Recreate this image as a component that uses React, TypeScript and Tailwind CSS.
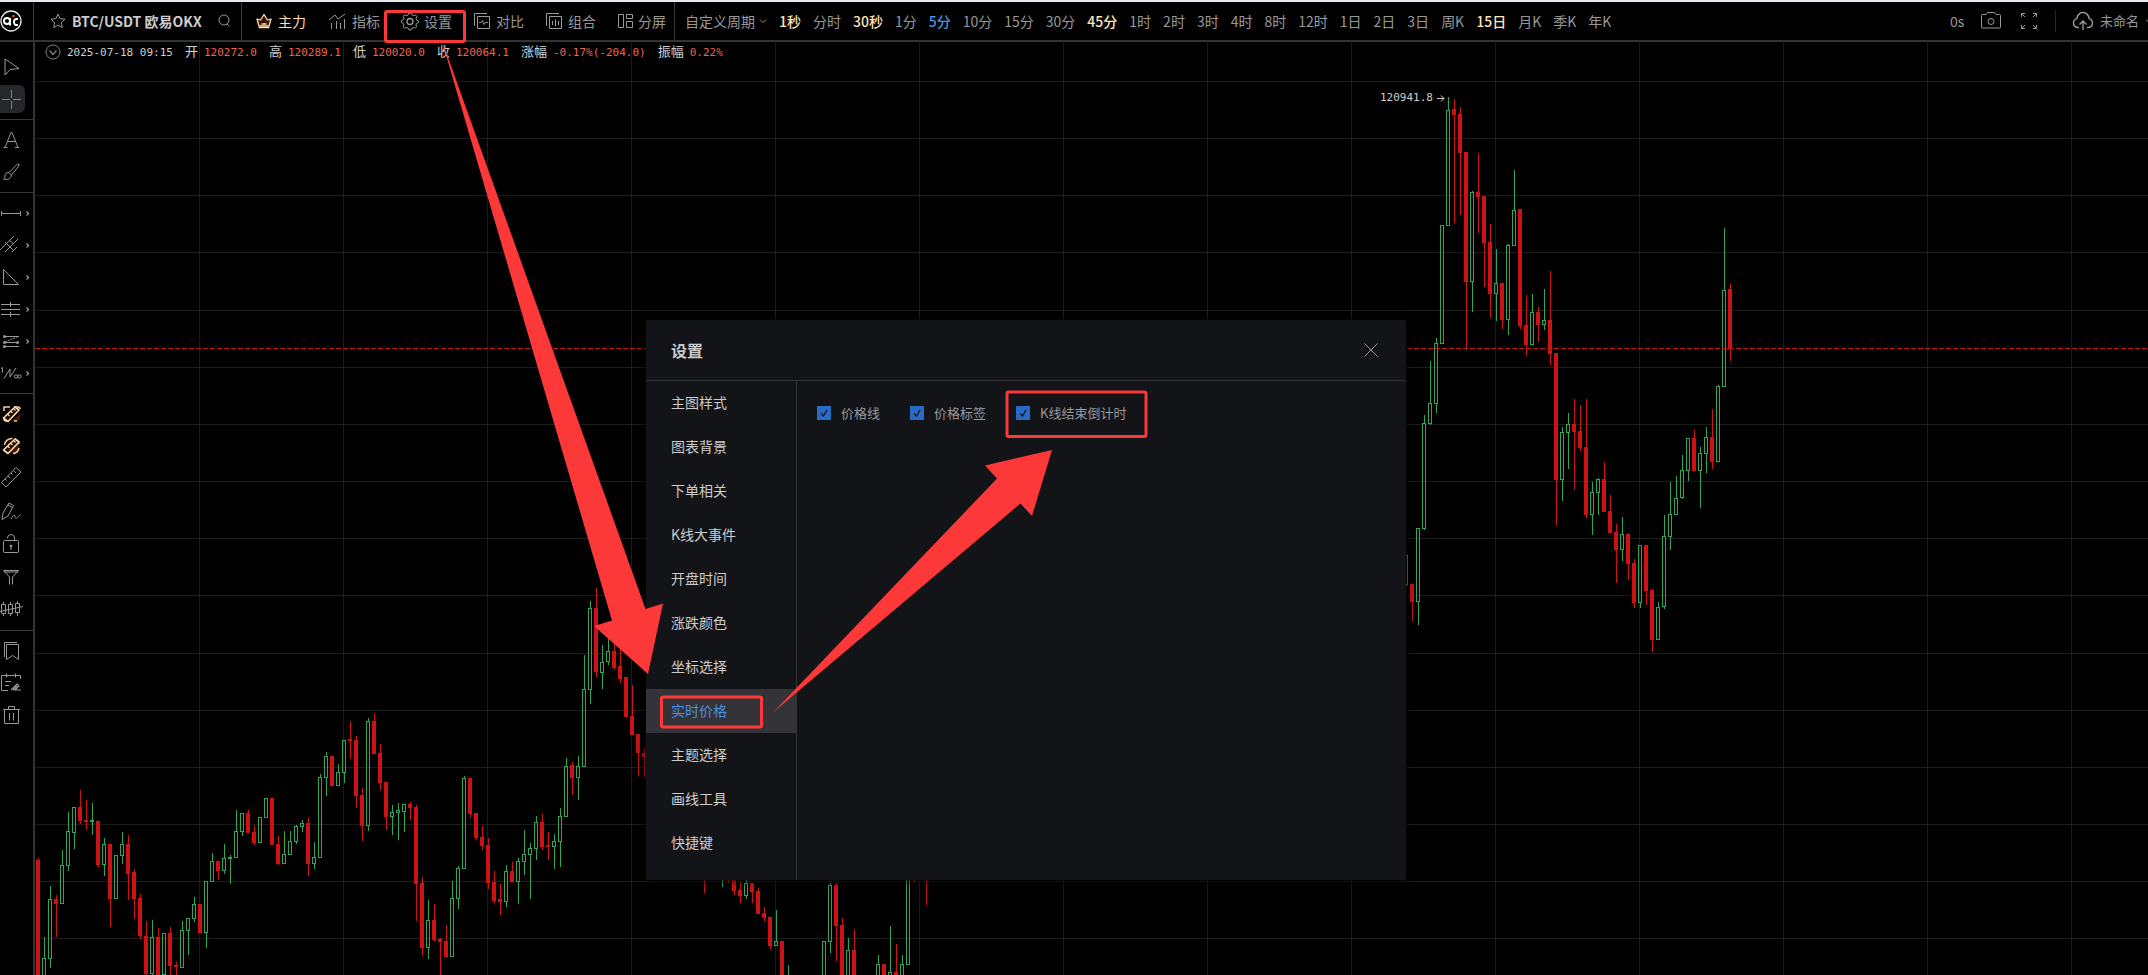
import { useState, type ReactNode } from "react";

// [up, high, body top, body bottom, low]
type Candle = [0 | 1, number, number, number, number];

const CANDLE_STEP = 6;
const LAST_PRICE_Y = 348;

// Each run starts at the given bar index; bars between the runs sit behind the dialog.
const RUNS: { start: number; bars: Candle[] }[] = [
  {
    start: 0,
    bars: [
      [0, 858, 860, 980, 980], [1, 937, 958, 985, 985], [1, 886, 899, 959, 968], [0, 895, 899, 904, 937],
      [1, 850, 865, 904, 904], [1, 812, 831, 866, 871], [1, 807, 807, 833, 849], [0, 790, 807, 821, 824],
      [0, 800, 820, 822, 830], [1, 803, 820, 822, 835], [0, 821, 821, 865, 867], [1, 838, 844, 865, 876],
      [0, 844, 844, 899, 927], [1, 855, 855, 899, 899], [1, 832, 844, 856, 864], [0, 835, 844, 874, 900],
      [0, 869, 872, 899, 919], [0, 894, 898, 936, 939], [0, 921, 936, 974, 980], [1, 920, 937, 974, 980],
      [0, 928, 937, 980, 980], [1, 933, 933, 975, 980], [0, 927, 933, 966, 980], [0, 962, 965, 967, 980],
      [1, 921, 930, 968, 968], [1, 918, 918, 931, 955], [1, 897, 904, 919, 922], [0, 904, 904, 933, 933],
      [1, 881, 881, 933, 948], [1, 853, 861, 882, 882], [0, 861, 861, 871, 880], [1, 844, 858, 871, 874],
      [1, 855, 857, 859, 884], [1, 810, 831, 858, 858], [1, 813, 813, 832, 836], [0, 810, 813, 833, 833],
      [0, 825, 832, 843, 845], [1, 817, 817, 843, 843], [1, 798, 798, 818, 818], [0, 798, 798, 845, 845],
      [0, 836, 844, 864, 865], [1, 831, 854, 864, 864], [1, 831, 841, 855, 855], [1, 825, 826, 842, 844],
      [1, 820, 823, 827, 832], [0, 818, 823, 864, 876], [1, 842, 857, 864, 869], [1, 774, 777, 858, 858],
      [1, 752, 756, 778, 796], [0, 756, 756, 786, 786], [1, 764, 772, 786, 786], [1, 740, 740, 773, 783],
      [0, 721, 739, 741, 759], [0, 736, 740, 796, 808], [0, 788, 795, 826, 841], [1, 718, 721, 826, 831],
      [0, 714, 721, 754, 754], [0, 744, 753, 783, 790], [0, 782, 782, 817, 830], [1, 805, 812, 817, 835],
      [1, 803, 810, 813, 840], [1, 804, 804, 812, 832], [0, 802, 804, 808, 820], [0, 805, 807, 884, 921],
      [0, 877, 883, 948, 955], [1, 900, 920, 948, 959], [0, 904, 920, 940, 942], [0, 938, 939, 942, 980],
      [0, 925, 941, 957, 957], [1, 881, 898, 957, 957], [1, 866, 868, 899, 909], [1, 776, 778, 869, 869],
      [0, 778, 778, 814, 818], [0, 813, 813, 838, 840], [0, 826, 837, 846, 850], [0, 838, 845, 883, 889],
      [0, 871, 882, 901, 903], [0, 884, 899, 902, 915], [1, 865, 871, 902, 907], [0, 862, 871, 882, 882],
      [1, 858, 861, 882, 904], [1, 830, 854, 862, 875], [1, 843, 848, 855, 899], [1, 816, 822, 849, 860],
      [0, 814, 822, 847, 850], [0, 832, 845, 847, 860], [1, 834, 841, 847, 869], [1, 808, 816, 842, 867],
      [1, 758, 766, 817, 817], [0, 762, 765, 778, 795], [1, 756, 766, 778, 800], [1, 655, 689, 767, 767],
      [1, 601, 608, 690, 704], [0, 588, 608, 672, 677], [1, 645, 662, 673, 689], [1, 638, 651, 662, 665],
      [0, 643, 651, 668, 670], [0, 649, 666, 679, 683], [0, 677, 677, 717, 717], [0, 685, 716, 735, 735],
      [0, 734, 734, 753, 776], [0, 748, 753, 757, 777],
    ],
  },
  { start: 111, bars: [[0, 850, 855, 860, 893]] },
  {
    start: 114,
    bars: [
      [1, 850, 855, 860, 887], [0, 850, 855, 870, 883], [0, 850, 860, 891, 895], [0, 882, 890, 896, 903],
      [1, 880, 883, 896, 899], [0, 883, 883, 892, 903], [0, 888, 891, 914, 914], [0, 907, 913, 918, 921],
      [0, 917, 917, 946, 950], [1, 910, 941, 946, 946], [0, 941, 941, 980, 980], [1, 965, 985, 990, 990],
    ],
  },
  {
    start: 131,
    bars: [
      [1, 941, 941, 980, 980], [1, 883, 885, 942, 953], [0, 883, 885, 926, 961], [0, 918, 925, 980, 980],
      [1, 938, 950, 980, 980], [0, 930, 950, 980, 980],
    ],
  },
  {
    start: 140,
    bars: [
      [1, 955, 964, 980, 980], [0, 964, 964, 980, 980], [1, 926, 972, 980, 980], [0, 944, 972, 980, 980],
      [1, 955, 964, 980, 980], [1, 870, 870, 965, 965], [0, 860, 865, 870, 882],
    ],
  },
  { start: 148, bars: [[0, 860, 865, 870, 905]] },
  {
    start: 228,
    bars: [
      [1, 555, 555, 585, 586], [0, 584, 584, 602, 621], [1, 528, 528, 602, 625], [1, 415, 423, 529, 530],
      [1, 361, 403, 424, 425], [1, 338, 343, 404, 413], [1, 225, 225, 344, 344], [1, 97, 110, 226, 226],
      [0, 99, 109, 115, 223], [0, 107, 114, 153, 215], [0, 152, 152, 282, 350], [1, 191, 192, 282, 312],
      [0, 153, 192, 197, 233], [0, 196, 196, 243, 287], [0, 224, 242, 294, 318], [1, 249, 283, 294, 321],
      [0, 283, 283, 320, 329], [1, 244, 245, 320, 335], [1, 170, 210, 246, 246], [0, 209, 209, 326, 329],
      [0, 295, 325, 345, 355], [1, 294, 312, 345, 345], [0, 307, 312, 325, 342], [1, 289, 320, 325, 330],
      [0, 271, 320, 354, 365], [0, 353, 353, 480, 525], [1, 427, 432, 480, 501], [1, 413, 424, 433, 469],
      [0, 399, 424, 432, 490], [0, 405, 431, 448, 451], [0, 399, 447, 515, 518], [1, 482, 492, 515, 535],
      [1, 478, 479, 493, 515], [0, 462, 479, 512, 512], [0, 495, 511, 533, 533], [0, 524, 532, 550, 583],
      [1, 517, 534, 550, 561], [0, 533, 534, 564, 580], [0, 559, 563, 603, 608], [1, 545, 545, 603, 608],
      [0, 545, 545, 591, 605], [0, 589, 590, 640, 652], [1, 602, 607, 640, 640], [1, 515, 536, 607, 609],
      [1, 482, 514, 537, 550], [1, 476, 498, 515, 515], [1, 455, 470, 498, 499], [1, 438, 438, 471, 481],
      [0, 430, 438, 471, 471], [1, 447, 453, 471, 508], [1, 427, 437, 454, 473], [0, 409, 437, 462, 469],
      [1, 385, 386, 462, 462], [1, 228, 290, 387, 387], [0, 284, 289, 349, 361],
    ],
  },
];

const GRID_Y = [81, 138, 195, 252, 310, 367, 424, 481, 538, 595, 653, 710, 767, 824, 881, 938];
const GRID_X = [199, 343, 487, 631, 775, 919, 1063, 1207, 1351, 1495, 1639, 1783, 1927, 2071];

const PERIODS: { label: string; tone?: "vip" | "active" }[] = [
  { label: "1秒", tone: "vip" },
  { label: "分时" },
  { label: "30秒", tone: "vip" },
  { label: "1分" },
  { label: "5分", tone: "active" },
  { label: "10分" },
  { label: "15分" },
  { label: "30分" },
  { label: "45分", tone: "vip" },
  { label: "1时" },
  { label: "2时" },
  { label: "3时" },
  { label: "4时" },
  { label: "8时" },
  { label: "12时" },
  { label: "1日" },
  { label: "2日" },
  { label: "3日" },
  { label: "周K" },
  { label: "15日", tone: "vip" },
  { label: "月K" },
  { label: "季K" },
  { label: "年K" },
];

const QUOTES = [
  { label: "开", value: "120272.0" },
  { label: "高", value: "120289.1" },
  { label: "低", value: "120020.0" },
  { label: "收", value: "120064.1" },
  { label: "涨幅", value: "-0.17%(-204.0)" },
  { label: "振幅", value: "0.22%" },
];

const MENU = [
  "主图样式",
  "图表背景",
  "下单相关",
  "K线大事件",
  "开盘时间",
  "涨跌颜色",
  "坐标选择",
  "实时价格",
  "主题选择",
  "画线工具",
  "快捷键",
];

const PRICE_OPTIONS = ["价格线", "价格标签", "K线结束倒计时"];

function Icon({ size = 16, className, children }: { size?: number; className?: string; children: ReactNode }) {
  return (
    <svg
      width={size}
      height={size}
      viewBox={`0 0 ${size} ${size}`}
      fill="none"
      stroke="currentColor"
      className={`shrink-0 ${className ?? ""}`}
      aria-hidden="true"
    >
      {children}
    </svg>
  );
}

function LinkedRuler({ round }: { round?: boolean }) {
  return (
    <>
      {round ? (
        <>
          <circle cx="13" cy="13" r="6" fill="#4a1708" stroke="none" />
          <path d="M4.500 11a7.500 7.500 0 0 1 8-6.500M15 5a7 7 0 0 1 4 5M19 14a7 7 0 0 1-6 5.500M9 19a7 7 0 0 1-4-3.500" stroke="#f5cf94" strokeWidth="1.500" />
        </>
      ) : (
        <>
          <path d="M11 19h6a3 3 0 0 0 3-3v-4z" fill="#4a1708" stroke="none" />
          <path d="M4 9V5h6M14 5h4a2 2 0 0 1 2 2M4 15v2a2 2 0 0 0 2 2h2M14 19h3" stroke="#f5cf94" strokeWidth="1.500" />
        </>
      )}
      <path d="M3.500 16 15 5l4 3L8 19.500z" fill="#1c0a04" stroke="#ffdda6" strokeWidth="1.600" strokeLinejoin="round" />
      <path d="m8 12.500 1.500 1.500M11 9.500l1.500 1.500M14 7l1.500 1.500" stroke="#ffdda6" strokeWidth="1.200" />
    </>
  );
}

// Drawn on a 24px box.
const TOOL_GROUPS: { name: string; more?: boolean; active?: boolean; draw: ReactNode }[][] = [
  [
    { name: "光标", draw: <path d="M5 4v16l5-5.500 9-1z" strokeLinejoin="round" /> },
    { name: "十字光标", active: true, draw: <path d="M2 12.500h8M13 12.500h8M11.500 3v8M11.500 14v8" /> },
  ],
  [
    { name: "文字", draw: <path d="m5 19.500 6-15h1l6 15M7.500 13.500h8M3.500 19.500h4M15 19.500h4" /> },
    {
      name: "画笔",
      draw: (
        <path d="M9 12.500 17 4.500l2-.500-.500 2.500-7 8.500M9 12.500l2.500 2.500M9 12.500c-3 0-4 1.500-4 3.500 0 1.500-.500 2.500-1.500 3 3 1 7.500.500 8-4" />
      ),
    },
  ],
  [
    { name: "线段", more: true, draw: <path d="M1.500 12.500h19M1.500 10v5M20.500 10v5" /> },
    {
      name: "平行线",
      more: true,
      draw: <path d="M0 17 14 3M5 19 18 6M12 19l5-5M5 9l6 6M9 7l5 4M8 12l5 5" />,
    },
    { name: "三角形", more: true, draw: <path d="M3.500 4.500v15h15z" /> },
    { name: "水平线", more: true, draw: <path d="M1 7.500h19M1 12.500h19M1 17.500h19M10.500 5v5M10.500 15v5" /> },
    {
      name: "斐波那契",
      more: true,
      draw: (
        <>
          <path d="M4 7.500h15M4 13.500h14M4 17.500h15" />
          <path d="m5 13 13-5.500" strokeDasharray="2 1" />
          <g fill="currentColor" stroke="none">
            <circle cx="4.500" cy="7.500" r="1.500" />
            <circle cx="4.500" cy="13.500" r="1.500" />
            <circle cx="17.500" cy="13.500" r="1.500" />
            <circle cx="4.500" cy="17.500" r="1.500" />
          </g>
        </>
      ),
    },
    {
      name: "波浪",
      more: true,
      draw: (
        <>
          <path d="M1 7.500 2.500 6.500v5M4 17.500 10 8v8l6-9" />
          <circle cx="16" cy="15.500" r="1.700" />
          <circle cx="19.500" cy="15.500" r="1.700" />
        </>
      ),
    },
  ],
  [
    { name: "关联画线", draw: <LinkedRuler /> },
    { name: "关联周期", draw: <LinkedRuler round /> },
    {
      name: "测量",
      draw: <path d="M1.500 16.500 16 1.500l5 4.500L6 21zM5 13l1.500 1.500M8 10l2.500 2.500M11 7l1.500 1.500M13.500 4.500 16 7" />,
    },
    {
      name: "自由绘制",
      draw: (
        <path d="m2 21.500 1-6.500L9 5l4.500 2.500L8 18zM8 7l4.500 2.500M11 21c2-4 4-5 4-2.500s2 2 3.500 0 2-1.500 2.500-1.500" />
      ),
    },
    {
      name: "锁定",
      draw: (
        <>
          <rect x="3.500" y="10.500" width="15" height="12" rx="1" />
          <path d="M7.500 8.500V8a3.500 3.500 0 0 1 7 0v2.500M11 17v3" />
          <circle cx="11" cy="16" r="1.300" fill="currentColor" stroke="none" />
        </>
      ),
    },
    { name: "筛选", draw: <path d="M3.500 8.500h15M4 10h14M3.500 8.500 9.500 15v7.500M18.500 8.500 12.500 15v7.500" /> },
    {
      name: "K线形态",
      draw: (
        <path d="M1.500 10.500h4v9h-4zM8.500 10.500h4v9h-4zM15.500 9.500h4v9h-4zM3.500 8v2.500M3.500 19.500V22M10.500 8v2.500M10.500 19.500V22M17.500 7v2.500M17.500 18.500V22M0 17.500l23-5" />
      ),
    },
  ],
  [
    { name: "书签", draw: <path d="M6.500 5.500h12v15l-6-4-6 4zM4.500 18V3.500H17" /> },
    {
      name: "备注",
      draw: (
        <>
          <path d="M8 19.500H1.500v-15H20.500V8M6.500 2.500v4M15.500 2.500v4M5 10.500h6M5 14.500h4" />
          <path d="m11 19 6-6 2 2-4 4h6M13 19l4-4" strokeWidth="1.200" />
        </>
      ),
    },
    { name: "删除", draw: <path d="M3 6.500h17M8.500 6V3.500h6V6M4.500 6.500v14h14v-14M9.500 10v7.500M13.500 10v7.500" /> },
  ],
];

function Toolbar() {
  const tab = "flex items-center gap-1.5";
  return (
    <header className="flex h-10 shrink-0 items-stretch border-b-2 border-[#333] bg-black text-sm leading-5 text-[#999]">
      <a href="#home" aria-label="首页" className="flex w-[34px] shrink-0 items-center border-r border-[#3a3a3a]">
        <Icon size={22}>
          <circle cx="11" cy="11" r="10" stroke="#e6e6e6" strokeWidth="1.300" />
          <circle cx="7" cy="11" r="3" stroke="#fff" strokeWidth="2" />
          <path d="M10 8v7.500M18 9c-3-.500-4 1-4 3s1 3.500 4 3" stroke="#fff" strokeWidth="2" />
          <circle cx="13.500" cy="6" r="1.300" fill="#e8403a" stroke="none" />
        </Icon>
      </a>

      <div className="flex w-52 shrink-0 items-center border-r border-[#3a3a3a] pl-4">
        <button type="button" aria-label="收藏" className="mr-1.5">
          <Icon>
            <path d="m8 1 2 4.600 5 .600-3.700 3.400 1 5L8 12l-4.300 2.600 1-5L1 6.200l5-.600z" strokeLinejoin="round" />
          </Icon>
        </button>
        <span className="w-[136px] whitespace-nowrap font-bold text-[#ccc]">BTC/USDT 欧易OKX</span>
        <button type="button" aria-label="搜索" className="ml-2">
          <Icon>
            <circle cx="8" cy="7" r="5" />
            <path d="m11 11 2.500 2.500" />
          </Icon>
        </button>
      </div>

      <nav className="flex shrink-0 items-center gap-[22px] whitespace-nowrap border-r border-[#3a3a3a] pl-3.5 pr-2">
        <button type="button" className="flex items-center gap-1.5 text-[#ffdca8]">
          <Icon>
            <path d="m3 13-2-7 3.500 1L8 1.500 11.500 7 15 6l-2 7z" fill="#3a1206" strokeWidth="1.300" strokeLinejoin="round" />
            <path d="M2.500 14.500h11M5.500 11h5" strokeWidth="1.500" />
          </Icon>
          主力
        </button>
        <button type="button" className={tab}>
          <Icon size={18}>
            <path d="M3.500 11v6M8.500 9v8M12.500 11v6M16.500 7v10M1 8l6-5 3 4 7-5" />
          </Icon>
          指标
        </button>
        <button type="button" className={tab}>
          <Icon className="overflow-visible">
            <path
              d="M7 0h2l1 2 1.500.600L13.500 2 15 3.500 14 5.500l.500 1.500L16.500 8v1.500L14.500 10.500 14 12l.600 2-1.300 1.200L11.500 14.500 10 15l-1 2H7L6 15l-1.500-.500L2.500 15.200 1.200 14 2 12l-.600-1.500L-.500 9.500V7.500L1.500 6.500 2 5 1.200 3.500 2.500 2 4.500 2.600 6 2z"
              strokeLinejoin="round"
            />
            <circle cx="8" cy="8.500" r="3" strokeWidth="1.300" />
          </Icon>
          设置
        </button>
        <button type="button" className={tab}>
          <Icon>
            <path d="M3.500 3.500h12v12h-12zM.500 13V.500H13M5 9.500h2l1.500-2 1.500 4 1.500-2H14" />
          </Icon>
          对比
        </button>
        <button type="button" className={tab}>
          <Icon>
            <path d="M3.500 3.500h12v12h-12zM.500 13V.500H13M6.500 8v4M9.500 6.500V13M12.500 8v4" />
          </Icon>
          组合
        </button>
        <button type="button" className="flex items-center gap-1">
          <Icon>
            <path d="M.500 1.500h5v13h-5zM8.500 1.500h6v4h-6zM8.500 8.500h6v6h-6z" />
          </Icon>
          分屏
        </button>
      </nav>

      <div className="flex min-w-0 items-center gap-3 overflow-hidden whitespace-nowrap pl-2.5">
        <button type="button" className="flex items-center gap-1">
          自定义周期
          <Icon size={8}>
            <path d="m1 2.500 3 3 3-3" />
          </Icon>
        </button>
        {PERIODS.map((period) => (
          <button
            key={period.label}
            type="button"
            className={
              period.tone === "vip"
                ? "font-medium text-[#ffe2b8]"
                : period.tone === "active"
                  ? "font-medium text-[#4a90e2]"
                  : ""
            }
          >
            {period.label}
          </button>
        ))}
      </div>

      <div className="ml-auto flex w-[198px] shrink-0 items-center overflow-hidden whitespace-nowrap">
        <span className="w-[31px] shrink-0">0s</span>
        <button type="button" aria-label="截图" className="mr-5 shrink-0">
          <Icon size={20}>
            <path d="M1.500 3.500h3.500l1.500-2h7l1.500 2h3.500a1 1 0 0 1 1 1v11.500a1 1 0 0 1-1 1h-17a1 1 0 0 1-1-1V4.500a1 1 0 0 1 1-1z" />
            <circle cx="10" cy="10.500" r="3" />
          </Icon>
        </button>
        <button type="button" aria-label="全屏" className="mr-[18px] shrink-0">
          <Icon>
            <path d="M.500 4V.500H4M12 .500h3.500V4M15.500 12v3.500H12M4 15.500H.500V12M.500.500 4 4M15.500.500 12 4M15.500 15.500 12 12M.500 15.500 4 12" />
          </Icon>
        </button>
        <button type="button" className="flex shrink-0 items-center gap-1.5 border-l border-[#262626] pl-4 text-[13px]">
          <Icon size={22}>
            <path
              d="M7 17.500H5.500a4.500 4.500 0 0 1-.700-8.800C5.500 5 8 2.500 11 2.500s5.500 2.500 6.200 6.200a4.500 4.500 0 0 1-.700 8.800H15M11 20v-9M7.500 14.500 11 11l3.500 3.500"
              strokeWidth="1.400"
            />
          </Icon>
          未命名
          <Icon size={8}>
            <path d="m1 2.500 3 3 3-3" />
          </Icon>
        </button>
      </div>
    </header>
  );
}

function ToolRail() {
  return (
    <aside className="flex w-[35px] shrink-0 flex-col border-r-2 border-[#333] pt-[5px] text-[#999]">
      {TOOL_GROUPS.map((group, index) => (
        <div key={index} className={`border-b border-[#3a3a3a] pt-1 last:border-b-0 ${index === 3 ? "pb-2" : "pb-1"}`}>
          {group.map((tool) => (
            <button key={tool.name} type="button" aria-label={tool.name} className="flex h-8 w-full items-center">
              <span
                className={
                  tool.active
                    ? "flex h-7 w-[25px] items-center rounded-r-md bg-[#26272b] text-[#4a90e2]"
                    : "flex h-7 w-[25px] items-center"
                }
              >
                <Icon size={24}>{tool.draw}</Icon>
              </span>
              {tool.more && (
                <Icon size={5}>
                  <path d="m1.500.500 2 2-2 2" strokeWidth="1.300" />
                </Icon>
              )}
            </button>
          ))}
        </div>
      ))}
    </aside>
  );
}

function CandleBar({ index, bar }: { index: number; bar: Candle }) {
  const [up, high, top, bottom, low] = bar;
  const x = 36 + index * CANDLE_STEP;
  if (up) {
    return (
      <g fill="#2fa557">
        <rect x={x + 2} y={high} width={1} height={top - high} />
        <rect x={x + 2} y={bottom} width={1} height={low - bottom} />
        <rect x={x + 0.5} y={top + 0.5} width={3} height={Math.max(bottom - top - 1, 1)} fill="none" stroke="#2fa557" />
      </g>
    );
  }
  return (
    <g fill="#cc1212">
      <rect x={x + 2} y={high} width={1} height={low - high} />
      <rect x={x} y={top} width={4} height={bottom - top} />
    </g>
  );
}

function Chart() {
  return (
    <div className="relative min-w-0 flex-1 overflow-hidden">
      <svg className="absolute inset-0 h-full w-full" shapeRendering="crispEdges" role="img" aria-label="K线图">
        <g transform="translate(-35 -42)">
          {GRID_Y.map((y) => (
            <rect key={y} x={35} y={y} width={4000} height={1} fill="#1c1c1c" />
          ))}
          {GRID_X.map((x) => (
            <rect key={x} x={x} y={42} width={1} height={3000} fill="#1c1c1c" />
          ))}
          {RUNS.map((run) =>
            run.bars.map((bar, i) => <CandleBar key={run.start + i} index={run.start + i} bar={bar} />),
          )}
          <path d={`M35 ${LAST_PRICE_Y + 0.5}H4000`} stroke="#cc1212" strokeDasharray="5 2" />
          <text x="1380" y="101" fill="#d0d0d0" fontSize="11" fontFamily="DejaVu Sans Mono, monospace">
            120941.8
          </text>
          <path d="M1437 98.500h7M1441 95.500l3 3-3 3" fill="none" stroke="#d0d0d0" shapeRendering="auto" />
        </g>
      </svg>

      <div className="relative flex items-center whitespace-nowrap pl-2.5 leading-[18px]">
        <button type="button" aria-label="收起" className="mr-1.5 text-[#808080]">
          <Icon>
            <circle cx="8" cy="8" r="7" />
            <path d="m4.500 6.500 3.500 4 3.500-4" strokeWidth="1.200" />
          </Icon>
        </button>
        <div className="flex items-baseline gap-3">
          <span className="font-['DejaVu_Sans_Mono',monospace] text-[11px] text-[#d0d0d0]">2025-07-18 09:15</span>
          {QUOTES.map((quote) => (
            <span key={quote.label} className="flex items-baseline gap-1.5">
              <span className="text-[13px] text-[#d0d0d0]">{quote.label}</span>
              <span className="font-['DejaVu_Sans_Mono',monospace] text-[11px] text-[#f4604c]">{quote.value}</span>
            </span>
          ))}
        </div>
      </div>
    </div>
  );
}

function SettingsDialog() {
  const [section, setSection] = useState("实时价格");
  const [enabled, setEnabled] = useState<string[]>(PRICE_OPTIONS);

  function toggle(option: string) {
    setEnabled((prev) => (prev.includes(option) ? prev.filter((item) => item !== option) : [...prev, option]));
  }

  return (
    <div
      role="dialog"
      aria-labelledby="settings-title"
      className="absolute left-[646px] top-[320px] flex h-[560px] w-[760px] flex-col rounded-xs bg-[#131418] shadow-[0_0_8px_#000]"
    >
      <div className="flex h-[61px] shrink-0 items-center justify-between border-b border-[#333436] pl-[25px] pr-7">
        <h2 id="settings-title" className="text-base font-bold text-[#ccc]">
          设置
        </h2>
        <button type="button" aria-label="关闭" className="text-[#999]">
          <Icon size={14}>
            <path d="m.500.500 13 13M13.500.500l-13 13" />
          </Icon>
        </button>
      </div>
      <div className="flex min-h-0 flex-1">
        <ul className="w-[151px] shrink-0 border-r border-[#333436] text-sm text-[#ccc]">
          {MENU.map((item) => (
            <li key={item}>
              <button
                type="button"
                onClick={() => setSection(item)}
                className={
                  item === section
                    ? "h-11 w-full bg-[#343337] px-[25px] pb-0.5 text-left text-[#4a90e2]"
                    : "h-11 w-full px-[25px] pb-0.5 text-left"
                }
              >
                {item}
              </button>
            </li>
          ))}
        </ul>
        <div className="flex items-start gap-[30px] px-5 pt-[22px]">
          {PRICE_OPTIONS.map((option) => (
            <label key={option} className="flex items-center gap-2.5 whitespace-nowrap text-[13px] leading-5 text-[#999]">
              <span className="relative flex">
                <input
                  type="checkbox"
                  checked={enabled.includes(option)}
                  onChange={() => toggle(option)}
                  className="peer size-3.5 appearance-none border border-[#555] checked:border-[#286ac4] checked:bg-[#286ac4]"
                />
                <Icon size={14} className="pointer-events-none absolute inset-0 hidden text-[#10141c] peer-checked:block">
                  <path d="m4 7.500 2.500 2.500L10 4" strokeWidth="1.300" />
                </Icon>
              </span>
              {option}
            </label>
          ))}
        </div>
      </div>
    </div>
  );
}

// Tutorial markup laid over the whole page.
function Annotations() {
  return (
    <svg className="pointer-events-none absolute inset-0 h-full w-full" aria-hidden="true">
      <g fill="none" stroke="#fc3838" strokeWidth="3">
        <rect x="385.500" y="11.500" width="79" height="30" rx="1.500" />
        <rect x="1007" y="392" width="139" height="44.500" rx="1.500" />
        <rect x="661.500" y="697" width="100" height="30" rx="1.500" />
      </g>
      <g fill="#fc3838">
        <path d="M441 38 645.500 609l17.500-5.500-15 70.500-54-48 18-5.500z" />
        <path d="M773 712.500 997 478.500l-12-13L1052 450l-20 66-11.500-12.500z" />
      </g>
    </svg>
  );
}

export default function App() {
  return (
    <div className="relative flex h-screen flex-col overflow-hidden bg-black font-['Noto_Sans_CJK_SC',sans-serif]">
      <div className="h-0.5 shrink-0 bg-[#e4e8ee]" />
      <Toolbar />
      <div className="flex min-h-0 flex-1">
        <ToolRail />
        <Chart />
      </div>
      <SettingsDialog />
      <Annotations />
    </div>
  );
}
